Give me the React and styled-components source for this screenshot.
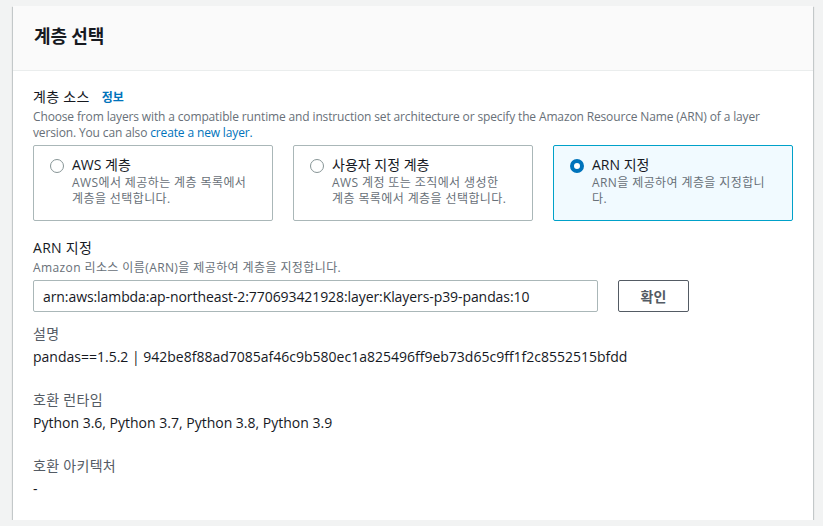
import React, { useState } from "react";
import styled, { createGlobalStyle } from "styled-components";

const Global = createGlobalStyle`
  html, body { margin: 0; padding: 0; background: #f2f3f3; }
  body {
    font-family: "Open Sans", "Noto Sans CJK KR", sans-serif;
    color: #16191f;
  }
  * { box-sizing: border-box; }
`;

const Page = styled.div`
  padding: 6px 10px 0 13px;
`;

const Card = styled.section`
  background: #fff;
  width: 800px;
  box-shadow: 0 1px 1px 0 rgba(0, 28, 36, 0.3), 1px 1px 1px 0 rgba(0, 28, 36, 0.15),
    -1px 1px 1px 0 rgba(0, 28, 36, 0.15);
`;

const Header = styled.header`
  background: #fafafa;
  border-bottom: 1px solid #eaeded;
  height: 65px;
  padding: 18px 20px 0 21px;
`;

const Title = styled.h2`
  margin: 0;
  font-size: 18px;
  line-height: 22px;
  font-weight: 700;
  font-family: "Noto Sans CJK KR", sans-serif;
  color: #16191f;
`;

const Body = styled.div`
  padding: 15px 20px 20px 20px;
`;

const LabelRow = styled.div`
  display: flex;
  align-items: baseline;
  gap: 12px;
`;

const Label = styled.div`
  font-size: 14px;
  line-height: 22px;
  letter-spacing: 0.3px;
  color: ${(p) => (p.$muted ? "#545b64" : "#16191f")};
`;

const InfoLink = styled.a`
  font-size: 12px;
  font-weight: 700;
  color: #0073bb;
  text-decoration: none;
`;

const Desc = styled.div`
  font-size: 12px;
  line-height: 16px;
  color: #687078;
  margin-top: 1px;
  letter-spacing: ${(p) => (p.$korean ? "0.4px" : "-0.14px")};
`;

const Link = styled.a`
  color: #0073bb;
  text-decoration: none;
`;

const Tiles = styled.div`
  display: grid;
  grid-template-columns: repeat(3, 1fr);
  gap: 20px;
  margin-top: 4px;
`;

const Tile = styled.label`
  display: flex;
  gap: 8px;
  height: 76px;
  padding: 9px 20px 12px 16px;
  border: 1px solid ${(p) => (p.$selected ? "#00a1c9" : "#aab7b8")};
  background: ${(p) => (p.$selected ? "#f1faff" : "#fff")};
  border-radius: 2px;
  cursor: pointer;
`;

const Radio = styled.span`
  flex: none;
  width: 14px;
  height: 14px;
  margin-top: 4px;
  border-radius: 50%;
  border: ${(p) => (p.$checked ? "4px solid #0073bb" : "1px solid #879596")};
  background: #fff;
`;

const TileText = styled.div`
  display: flex;
  flex-direction: column;
  min-width: 0;
`;

const TileTitle = styled.div`
  font-size: 14px;
  line-height: 20px;
  color: #16191f;
`;

const TileDesc = styled.div`
  font-size: 12px;
  line-height: 16px;
  color: #687078;
  letter-spacing: 0.4px;
`;

const Field = styled.div`
  margin-top: 16px;
`;

const InputRow = styled.div`
  display: flex;
  align-items: center;
  gap: 20px;
  margin-top: 4px;
`;

const Input = styled.input`
  width: 565px;
  height: 32px;
  border: 1px solid #aab7b8;
  border-radius: 2px;
  padding: 0 9px;
  font-family: "Open Sans", "Noto Sans CJK KR", sans-serif;
  font-size: 14px;
  letter-spacing: -0.08px;
  color: #16191f;
  outline: none;
`;

const Button = styled.button`
  width: 71px;
  height: 32px;
  border: 1px solid #545b64;
  border-radius: 2px;
  background: #fff;
  color: #545b64;
  font-family: "Noto Sans CJK KR", sans-serif;
  font-weight: 700;
  font-size: 14px;
  cursor: pointer;
`;

const Details = styled.div`
  display: flex;
  flex-direction: column;
  gap: 21px;
  margin-top: 11px;
`;

const Value = styled.div`
  font-size: 14px;
  line-height: 22px;
  color: #16191f;
  margin-top: 1px;
`;

const options = [
  { id: "aws", title: "AWS 계층", desc: "AWS에서 제공하는 계층 목록에서 계층을 선택합니다." },
  { id: "custom", title: "사용자 지정 계층", desc: "AWS 계정 또는 조직에서 생성한 계층 목록에서 계층을 선택합니다." },
  { id: "arn", title: "ARN 지정", desc: "ARN을 제공하여 계층을 지정합니다." },
];

const details = [
  { label: "설명", value: "pandas==1.5.2 | 942be8f88ad7085af46c9b580ec1a825496ff9eb73d65c9ff1f2c8552515bfdd" },
  { label: "호환 런타임", value: "Python 3.6, Python 3.7, Python 3.8, Python 3.9" },
  { label: "호환 아키텍처", value: "-" },
];

export default function App() {
  const [source, setSource] = useState("arn");
  return (
    <Page>
      <Global />
      <Card>
        <Header>
          <Title>계층 선택</Title>
        </Header>
        <Body>
          <LabelRow>
            <Label>계층 소스</Label>
            <InfoLink href="#">정보</InfoLink>
          </LabelRow>
          <Desc>
            Choose from layers with a compatible runtime and instruction set architecture or specify the Amazon
            Resource Name (ARN) of a layer version. You can also <Link href="#">create a new layer.</Link>
          </Desc>
          <Tiles>
            {options.map((o) => (
              <Tile key={o.id} $selected={source === o.id} onClick={() => setSource(o.id)}>
                <Radio $checked={source === o.id} />
                <TileText>
                  <TileTitle>{o.title}</TileTitle>
                  <TileDesc>{o.desc}</TileDesc>
                </TileText>
              </Tile>
            ))}
          </Tiles>
          <Field>
            <Label>ARN 지정</Label>
            <Desc $korean>Amazon 리소스 이름(ARN)을 제공하여 계층을 지정합니다.</Desc>
            <InputRow>
              <Input defaultValue="arn:aws:lambda:ap-northeast-2:770693421928:layer:Klayers-p39-pandas:10" />
              <Button>확인</Button>
            </InputRow>
          </Field>
          <Details>
            {details.map((d) => (
              <div key={d.label}>
                <Label $muted>{d.label}</Label>
                <Value>{d.value}</Value>
              </div>
            ))}
          </Details>
        </Body>
      </Card>
    </Page>
  );
}
